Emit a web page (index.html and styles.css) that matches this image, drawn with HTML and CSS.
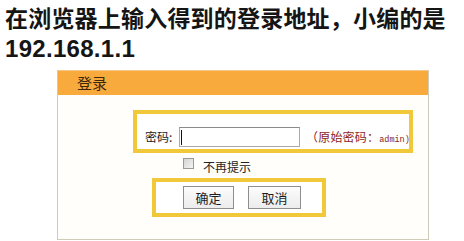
FILE: index.html
```html
<!DOCTYPE html>
<html lang="zh-CN">
<head>
<meta charset="utf-8">
<title>登录</title>
<link rel="stylesheet" href="styles.css">
</head>
<body>
<div class="headline">
  <div class="line1">在浏览器上输入得到的登录地址，小编的是</div>
  <div class="line2">192.168.1.1</div>
</div>
<div class="panel">
  <div class="panel-head">登录</div>
  <div class="panel-body">
    <div class="hl hl-pass">
      <span class="label">密码:</span>
      <span class="input"><span class="caret"></span></span>
      <span class="hint">（原始密码：<span class="mono">admin)</span></span>
    </div>
    <div class="remember">
      <span class="check"></span>
      <span class="remember-text">不再提示</span>
    </div>
    <div class="hl hl-btns">
      <span class="btn btn-ok">确定</span>
      <span class="btn btn-cancel">取消</span>
    </div>
  </div>
</div>
</body>
</html>
```
FILE: styles.css
```css
html, body {
  margin: 0;
  padding: 0;
  background: #ffffff;
}
body {
  font-family: "Noto Sans CJK SC", "Noto Sans", sans-serif;
  color: #111;
}
.headline {
  padding: 0 0 0 5px;
  font-weight: 700;
  color: #151515;
}
.line1 {
  font-size: 23px;
  line-height: 35px;
  height: 35px;
  letter-spacing: 0.2px;
}
.line2 {
  font-family: "Liberation Sans", Arial, sans-serif;
  font-size: 24px;
  line-height: 28px;
  height: 28px;
  letter-spacing: 0.3px;
}
.panel {
  margin: 7px 0 0 57px;
  width: 372px;
  height: 170px;
  box-sizing: border-box;
  border: 1px solid #cfcbb8;
  border-top-color: #f3c88a;
  background: #fffefa;
}
.panel-head {
  height: 24px;
  background: #f8aa3c;
  padding-left: 19px;
  font-size: 15px;
  line-height: 24px;
  color: #3a2808;
}
.panel-body {
  padding: 15px 0 0 75px;
  display: flex;
  flex-direction: column;
  align-items: flex-start;
}
.hl {
  box-sizing: border-box;
  border: 4px solid #f0c83a;
  background: #ffffff;
  display: flex;
}
.hl-pass {
  width: 280px;
  height: 43px;
  padding: 13px 0 0 8px;
  align-items: flex-start;
}
.hl-pass > * {
  flex: none;
}
.label {
  width: 34px;
  font-size: 12px;
  line-height: 20px;
  color: #222;
}
.input {
  width: 121px;
  height: 20px;
  box-sizing: border-box;
  border: 1px solid #a9a9a9;
  border-top-color: #8a8a8a;
  background: #fff;
  display: flex;
  align-items: center;
  padding-left: 1px;
}
.caret {
  width: 1px;
  height: 15px;
  background: #111;
}
.hint {
  margin-left: 6px;
  font-size: 12px;
  line-height: 20px;
  color: #8c2424;
  letter-spacing: 0.2px;
}
.mono {
  font-family: "Liberation Mono", monospace;
  font-size: 8.5px;
  letter-spacing: 0;
}
.remember {
  margin: 5px 0 0 50px;
  height: 16px;
  display: flex;
  align-items: flex-start;
}
.check {
  width: 11px;
  height: 11px;
  box-sizing: border-box;
  border: 1px solid #9a9a9a;
  background: linear-gradient(135deg, #d4d4d4, #f4f4f4);
}
.remember-text {
  margin-left: 9px;
  padding-top: 1px;
  font-size: 12px;
  line-height: 16px;
  color: #222;
}
.hl-btns {
  margin: 4px 0 0 19px;
  width: 174px;
  height: 39px;
  padding: 4px 0 0 27px;
  gap: 14px;
}
.btn {
  height: 23px;
  box-sizing: border-box;
  border: 1px solid #8e8e8e;
  background: linear-gradient(#fcfcfc, #ececec);
  font-size: 13px;
  line-height: 21px;
  text-align: center;
  color: #1e1e1e;
}
.btn-ok {
  width: 51px;
}
.btn-cancel {
  width: 53px;
}
```
